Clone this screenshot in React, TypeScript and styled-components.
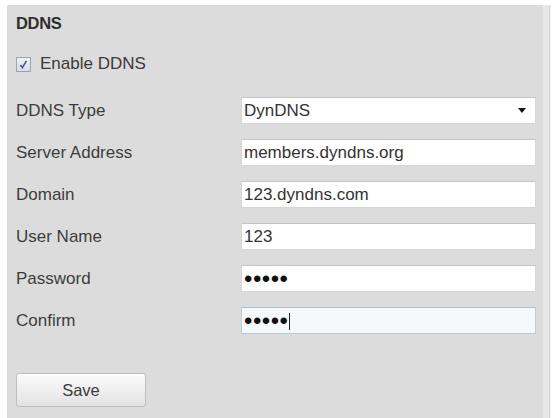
import React from "react";
import styled, { createGlobalStyle } from "styled-components";

const GlobalStyle = createGlobalStyle`
  html, body {
    margin: 0;
    padding: 0;
    background: #ffffff;
  }
  body {
    font-family: "Liberation Sans", Arial, sans-serif;
    color: #3a3a3a;
  }
  * { box-sizing: border-box; }
`;

const Page = styled.div`
  width: 554px;
  height: 418px;
  padding: 5px 3px 0 7px;
  overflow: hidden;
`;

const Panel = styled.section`
  height: 413px;
  padding: 8px 0 0 9px;
  display: flex;
  flex-direction: column;
  align-items: flex-start;
  background: linear-gradient(
    to left,
    #f4f4f4 0 1px,
    #cfcfcf 1px 2px,
    #e7e7e7 2px 8px,
    #dcdcdc 8px
  );
`;

const Title = styled.h2`
  margin: 0;
  font-size: 16.5px;
  font-weight: bold;
  line-height: 20px;
  letter-spacing: -0.3px;
  color: #2e2e2e;
`;

const CheckRow = styled.label`
  margin-top: 21px;
  height: 20px;
  display: flex;
  align-items: center;
  gap: 9px;
  font-size: 17px;
  color: #3a3a3a;
`;

const Form = styled.div`
  margin-top: 23px;
  display: grid;
  grid-template-columns: 225px 295px;
  grid-auto-rows: 27px;
  row-gap: 15px;
`;

const Label = styled.span`
  align-self: center;
  font-size: 17px;
  line-height: 20px;
  color: #3c3c3c;
`;

const FieldWrap = styled.div`
  position: relative;
  height: 27px;
`;

const TextField = styled.input<{ $focused?: boolean }>`
  width: 100%;
  height: 27px;
  margin: 0;
  padding: 0 2px;
  border: 1px solid ${(p) => (p.$focused ? "#b4cde0" : "#d6d6d6")};
  border-top-color: ${(p) => (p.$focused ? "#a9c3d8" : "#c4c4c4")};
  background: ${(p) => (p.$focused ? "#f5f9fc" : "#ffffff")};
  font-family: "Liberation Sans", Arial, sans-serif;
  font-size: 17px;
  color: #333333;
  outline: none;
`;

const PasswordField = styled(TextField)`
  font-size: 24px;
  letter-spacing: 0.5px;
  color: #111111;
`;

const Caret = styled.span`
  position: absolute;
  top: 6px;
  width: 1px;
  height: 17px;
  background: #222222;
`;

const SelectField = styled.select`
  appearance: none;
  width: 100%;
  height: 27px;
  margin: 0;
  padding: 0 2px;
  border: 1px solid #d6d6d6;
  border-top-color: #c4c4c4;
  background: #ffffff;
  font-family: "Liberation Sans", Arial, sans-serif;
  font-size: 17px;
  color: #333333;
  outline: none;
`;

const Arrow = styled.svg`
  position: absolute;
  right: 10px;
  top: 11px;
  pointer-events: none;
`;

const SaveButton = styled.button`
  margin-top: 39px;
  width: 130px;
  height: 34px;
  border: 1px solid #bdbdbd;
  border-radius: 3px;
  background: linear-gradient(to bottom, #fbfbfb 0%, #efefef 50%, #e2e2e2 100%);
  box-shadow: inset 0 1px 0 #ffffff;
  font-family: "Liberation Sans", Arial, sans-serif;
  font-size: 16.5px;
  color: #3a3a3a;
  padding: 0;
`;

const CheckMark = () => (
  <svg width="15" height="15" viewBox="0 0 15 15">
    <defs>
      <linearGradient id="cbFill" x1="0" y1="0" x2="0" y2="1">
        <stop offset="0" stopColor="#eef2f8" />
        <stop offset="1" stopColor="#d5dde9" />
      </linearGradient>
    </defs>
    <rect x="0.5" y="0.5" width="14" height="14" fill="url(#cbFill)" stroke="#9aa3ae" />
    <path d="M4.3 8 L6.4 10.6 L10.4 3.8" fill="none" stroke="#4a5a86" strokeWidth="1.6" />
  </svg>
);

const fields = [
  { label: "Server Address", value: "members.dyndns.org" },
  { label: "Domain", value: "123.dyndns.com" },
  { label: "User Name", value: "123" },
];

export default function App() {
  return (
    <>
      <GlobalStyle />
      <Page>
        <Panel>
          <Title>DDNS</Title>
          <CheckRow>
            <CheckMark />
            Enable DDNS
          </CheckRow>
          <Form>
            <Label>DDNS Type</Label>
            <FieldWrap>
              <SelectField defaultValue="DynDNS">
                <option>DynDNS</option>
                <option>PeanutHull</option>
                <option>NO-IP</option>
              </SelectField>
              <Arrow width="8" height="5" viewBox="0 0 8 5">
                <path d="M0 0 H8 L4 5 Z" fill="#111" />
              </Arrow>
            </FieldWrap>
            {fields.map((f) => (
              <React.Fragment key={f.label}>
                <Label>{f.label}</Label>
                <FieldWrap>
                  <TextField type="text" defaultValue={f.value} />
                </FieldWrap>
              </React.Fragment>
            ))}
            <Label>Password</Label>
            <FieldWrap>
              <PasswordField type="password" defaultValue="12345" />
            </FieldWrap>
            <Label>Confirm</Label>
            <FieldWrap>
              <PasswordField type="password" defaultValue="12345" $focused />
              <Caret style={{ left: "48px" }} />
            </FieldWrap>
          </Form>
          <SaveButton type="button">Save</SaveButton>
        </Panel>
      </Page>
    </>
  );
}
